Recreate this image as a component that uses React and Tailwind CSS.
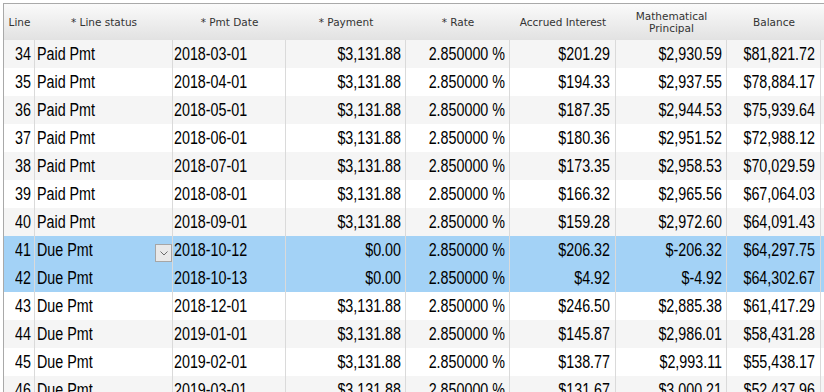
const COLS = [
  { key: 'line', label: 'Line', w: 'w-[31px]', align: 'text-right pr-[3px]' },
  { key: 'status', label: '* Line status', w: 'w-[138px]', align: 'text-left pl-[2px]' },
  { key: 'date', label: '* Pmt Date', w: 'w-[113px]', align: 'text-left pl-[1px]' },
  { key: 'payment', label: '* Payment', w: 'w-[120px]', align: 'text-right pr-[4px]' },
  { key: 'rate', label: '* Rate', w: 'w-[104px]', align: 'text-right pr-[4px]' },
  { key: 'interest', label: 'Accrued Interest', w: 'w-[106px]', align: 'text-right pr-[5px]' },
  { key: 'principal', label: 'Mathematical Principal', w: 'w-[111px]', align: 'text-right pr-[4px]' },
  { key: 'balance', label: 'Balance', w: 'w-[94px]', align: 'text-right pr-[5px]' },
]

const ROWS = [
  [34, 'Paid Pmt', '2018-03-01', '$3,131.88', '$201.29', '$2,930.59', '$81,821.72'],
  [35, 'Paid Pmt', '2018-04-01', '$3,131.88', '$194.33', '$2,937.55', '$78,884.17'],
  [36, 'Paid Pmt', '2018-05-01', '$3,131.88', '$187.35', '$2,944.53', '$75,939.64'],
  [37, 'Paid Pmt', '2018-06-01', '$3,131.88', '$180.36', '$2,951.52', '$72,988.12'],
  [38, 'Paid Pmt', '2018-07-01', '$3,131.88', '$173.35', '$2,958.53', '$70,029.59'],
  [39, 'Paid Pmt', '2018-08-01', '$3,131.88', '$166.32', '$2,965.56', '$67,064.03'],
  [40, 'Paid Pmt', '2018-09-01', '$3,131.88', '$159.28', '$2,972.60', '$64,091.43'],
  [41, 'Due Pmt', '2018-10-12', '$0.00', '$206.32', '$-206.32', '$64,297.75'],
  [42, 'Due Pmt', '2018-10-13', '$0.00', '$4.92', '$-4.92', '$64,302.67'],
  [43, 'Due Pmt', '2018-12-01', '$3,131.88', '$246.50', '$2,885.38', '$61,417.29'],
  [44, 'Due Pmt', '2019-01-01', '$3,131.88', '$145.87', '$2,986.01', '$58,431.28'],
  [45, 'Due Pmt', '2019-02-01', '$3,131.88', '$138.77', '$2,993.11', '$55,438.17'],
  [46, 'Due Pmt', '2019-03-01', '$3,131.88', '$131.67', '$3,000.21', '$52,437.96'],
]

const SELECTED = [41, 42]

function Chevron() {
  return (
    <svg width="8" height="5" viewBox="0 0 8 5" fill="none">
      <path d="M0.5 0.5 L4 4 L7.5 0.5" stroke="#6b6b6b" strokeWidth="1" />
    </svg>
  )
}

export default function App() {
  return (
    <div className="w-[824px] h-[392px] overflow-hidden bg-white pl-[3px] pt-[3px]">
      <div className="border-l border-t border-[#a9a9a9] w-[900px]">
        {/* header */}
        <div className="flex h-[36px] bg-gradient-to-b from-[#fafafa] to-[#e2e2e2] text-[#333] text-[10.5px] leading-[12px] font-['DejaVu_Sans',Verdana,sans-serif]">
          {COLS.map(c => (
            <div key={c.key} className={`${c.w} shrink-0 flex items-center justify-center text-center px-1`}>
              {c.key === 'principal' ? <span>Mathematical<br />Principal</span> : c.label}
            </div>
          ))}
          <div className="flex-1" />
        </div>

        {/* rows */}
        {ROWS.map((r, i) => {
          const sel = SELECTED.includes(r[0])
          const bg = sel ? 'bg-[#a3d2f6]' : i % 2 === 0 ? 'bg-[#f5f5f5]' : 'bg-white'
          const vals = [r[0], r[1], r[2], r[3], '2.850000 %', r[4], r[5], r[6]]
          return (
            <div key={r[0]} className={`flex h-[28px] ${bg} text-black text-[14.3px] font-['Liberation_Sans',Arial,sans-serif]`}>
              {COLS.map((c, j) => (
                <div key={c.key} className={`${c.w} shrink-0 box-border border-r border-[#dadada] leading-[28px] whitespace-nowrap relative ${c.align}`}>
                  <span className="inline-block scale-y-[1.25]">{vals[j]}</span>
                  {r[0] === 41 && c.key === 'status' && (
                    <span className="absolute right-0 top-[8px] w-[17px] h-[18px] border border-[#a6a6a6] bg-[#e9e9e9] flex items-center justify-center">
                      <Chevron />
                    </span>
                  )}
                </div>
              ))}
              <div className="flex-1" />
            </div>
          )
        })}
      </div>
    </div>
  )
}
